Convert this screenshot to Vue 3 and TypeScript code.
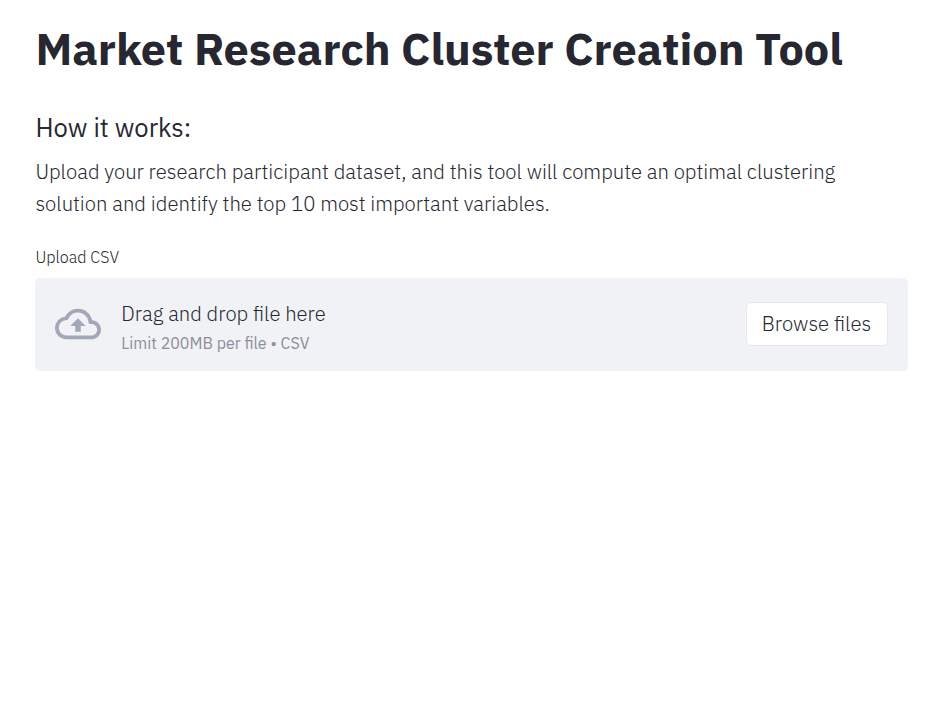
<script setup lang="ts">
const title: string = 'Market Research Cluster Creation Tool'
</script>

<template>
  <main class="page">
    <h1>{{ title }}</h1>
    <h3>How it works:</h3>
    <p class="intro"><span class="line">Upload your research participant dataset, and this tool will compute an optimal clustering</span> <span class="line">solution and identify the top 10 most important variables.</span></p>
    <label class="label">Upload CSV</label>
    <section class="dropzone">
      <svg class="cloud" viewBox="0 0 24 24" fill="currentColor"><path d="M19.35 10.04A7.49 7.49 0 0 0 12 4C9.11 4 6.6 5.64 5.35 8.04A5.994 5.994 0 0 0 0 14c0 3.31 2.69 6 6 6h13c2.76 0 5-2.24 5-5 0-2.64-2.05-4.78-4.65-4.96zM19 18H6c-2.21 0-4-1.79-4-4 0-2.05 1.53-3.76 3.56-3.97l1.07-.11.5-.95A5.469 5.469 0 0 1 12 6c2.62 0 4.88 1.86 5.39 4.43l.3 1.5 1.53.11A2.98 2.98 0 0 1 22 15c0 1.65-1.35 3-3 3zM8 13h2.55v3h2.9v-3H16l-4-4z"/></svg>
      <div class="info">
        <span class="main">Drag and drop file here</span>
        <span class="limit">Limit 200MB per file • CSV</span>
      </div>
      <button type="button">Browse files</button>
    </section>
  </main>
</template>

<style>
body { background: #fff; }
</style>

<style scoped>
.page { box-sizing: border-box; width: 948px; padding: 18px 40px 0 35px; font-family: "IBM Plex Sans", "Noto Sans", sans-serif; font-weight: 300; color: #262730; display: flex; flex-direction: column; }
h1 { margin: 0; padding-left: .4px; font-size: 45px; line-height: 60px; font-weight: 700; white-space: nowrap; }
h3 { margin: 35px 0 0; padding-left: .4px; font-size: 25.6px; line-height: 30px; font-weight: 400; }
.intro { margin: 13px 0 0; padding-left: .4px; font-size: 20.31px; line-height: 32px; }
.line { display: block; white-space: nowrap; }
.label { margin-top: 27px; padding-left: .4px; font-size: 16.2px; line-height: 20px; }
.dropzone { box-sizing: border-box; margin-top: 11px; height: 93px; padding: 0 20px 1px; background: #f0f2f6; border-radius: 5px; display: flex; align-items: center; }
.cloud { width: 46px; height: 46px; color: #a3a8b8; margin-right: 20.3px; }
.info { display: flex; flex-direction: column; flex: 1; padding-top: 5px; }
.main { font-size: 20.25px; line-height: 32px; }
.limit { font-size: 16px; line-height: 26px; font-weight: 400; color: #8d8e99; }
button { width: 142px; height: 44px; padding: 0 1px 1px 0; background: #fff; border: 1px solid #e6e8ee; border-radius: 5px; font: inherit; font-size: 20.4px; color: inherit; }
</style>
